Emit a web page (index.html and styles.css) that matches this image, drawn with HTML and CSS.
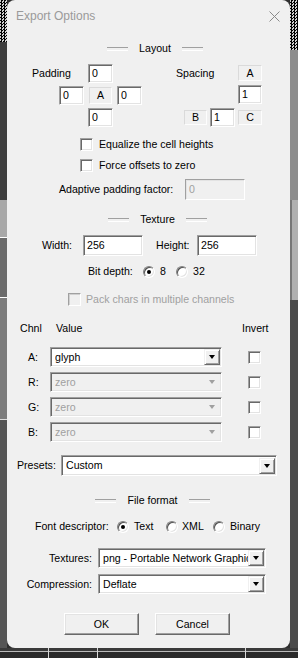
FILE: index.html
```html
<!DOCTYPE html>
<html>
<head>
    <meta charset="utf-8">
    <title>Export Options</title>
    <link rel="stylesheet" href="styles.css">
</head>
<body>
    <div class="desk">
        <div class="edge edge-left">
            <div class="chk"></div>
            <div class="seg seg-dark"></div>
            <div class="seg seg-light"></div>
            <div class="seg seg-arc"></div>
            <div class="seg seg-mid"></div>
            <div class="seg seg-low"></div>
        </div>

        <div class="dialog">
            <div class="titlebar">
                <span class="title">Export Options</span>
                <svg class="close" width="11" height="11" viewBox="0 0 11 11">
                    <path d="M0.5 0.5 L10.5 10.5 M10.5 0.5 L0.5 10.5" stroke="#8a8a8a" stroke-width="1" fill="none"/>
                </svg>
            </div>

            <div class="group-title gt-layout"><span>Layout</span></div>

            <div class="layout">
                <div class="pad-grid">
                    <span class="pad-lbl">Padding</span>
                    <div class="edit p-top">0</div>
                    <div class="edit p-left">0</div>
                    <div class="tag p-mid">A</div>
                    <div class="edit p-right">0</div>
                    <div class="edit p-bottom">0</div>
                </div>
                <div class="space-grid">
                    <span class="space-lbl">Spacing</span>
                    <div class="tag s-a">A</div>
                    <div class="edit s-one">1</div>
                    <div class="tag s-b">B</div>
                    <div class="edit s-two">1</div>
                    <div class="tag s-c">C</div>
                </div>
            </div>

            <div class="check-row check-first"><span class="box"></span>Equalize the cell heights</div>
            <div class="check-row check-second"><span class="box"></span>Force offsets to zero</div>

            <div class="adaptive">
                <span class="adaptive-lbl">Adaptive padding factor:</span>
                <div class="edit disabled adaptive-edit">0</div>
            </div>

            <div class="group-title gt-texture"><span>Texture</span></div>

            <div class="size-row">
                <span class="size-lbl">Width:</span>
                <div class="edit size-edit">256</div>
                <span class="size-lbl height-lbl">Height:</span>
                <div class="edit size-edit">256</div>
            </div>

            <div class="depth-row">
                <span class="depth-lbl">Bit depth:</span>
                <span class="opt opt-8"><span class="radio on"></span>8</span>
                <span class="opt"><span class="radio"></span>32</span>
            </div>

            <div class="check-row pack-row disabled-text"><span class="box box-off"></span>Pack chars in multiple channels</div>

            <div class="chan chan-head">
                <span>Chnl</span>
                <span class="value-head">Value</span>
                <span></span>
                <span>Invert</span>
            </div>

            <div class="chan chan-body">
                <span class="chan-lbl">A:</span>
                <div class="combo"><span class="val">glyph</span><span class="drop"></span></div>
                <span></span>
                <span class="chan-chk"><span class="box"></span></span>

                <span class="chan-lbl">R:</span>
                <div class="combo combo-off"><span class="val">zero</span><span class="drop"></span></div>
                <span></span>
                <span class="chan-chk"><span class="box"></span></span>

                <span class="chan-lbl">G:</span>
                <div class="combo combo-off"><span class="val">zero</span><span class="drop"></span></div>
                <span></span>
                <span class="chan-chk"><span class="box"></span></span>

                <span class="chan-lbl">B:</span>
                <div class="combo combo-off"><span class="val">zero</span><span class="drop"></span></div>
                <span></span>
                <span class="chan-chk"><span class="box"></span></span>
            </div>

            <div class="presets">
                <span class="presets-lbl">Presets:</span>
                <div class="combo presets-combo"><span class="val">Custom</span><span class="drop"></span></div>
            </div>

            <div class="group-title gt-file"><span>File format</span></div>

            <div class="desc-row">
                <span class="desc-lbl">Font descriptor:</span>
                <span class="opt opt-text"><span class="radio on"></span>Text</span>
                <span class="opt opt-xml"><span class="radio"></span>XML</span>
                <span class="opt"><span class="radio"></span>Binary</span>
            </div>

            <div class="file-grid">
                <span class="file-lbl">Textures:</span>
                <div class="combo"><span class="val">png - Portable Network Graphics</span><span class="drop"></span></div>
                <span class="file-lbl">Compression:</span>
                <div class="combo"><span class="val">Deflate</span><span class="drop"></span></div>
            </div>

            <div class="buttons">
                <div class="btn">OK</div>
                <div class="btn">Cancel</div>
            </div>
        </div>

        <div class="edge edge-right">
            <div class="chk chk-tall"></div>
            <div class="seg seg-grey"></div>
            <div class="seg seg-pale"></div>
            <div class="seg seg-deep"></div>
        </div>
    </div>
    <div class="floor"></div>
</body>
</html>
```

FILE: styles.css
```css
* {
    box-sizing: border-box;
}

body {
    margin: 0;
    width: 298px;
    height: 658px;
    overflow: hidden;
    background: #2e2e2e;
    font-family: "Liberation Sans", Arial, sans-serif;
    font-size: 10.6px;
    line-height: 13px;
    color: #000;
}

/* desktop behind the dialog */
.desk {
    display: flex;
    height: 648px;
}

.edge {
    width: 7px;
    display: flex;
    flex-direction: column;
}

.edge-right {
    width: 8px;
}

.chk {
    height: 42px;
    background: conic-gradient(#000 25%, #d0d0d0 0 50%, #000 0 75%, #d0d0d0 0) 0 0 / 3px 3px;
}

.chk-tall { height: 50px; }

.seg-dark { height: 158px; background: #3e3e3e; }
.seg-light { height: 38px; background: #a8a8a8; border-bottom: 1px solid #fff; }
.seg-arc { height: 60px; background: #6b6b6b; border-bottom: 1px solid #fff; }
.seg-mid { height: 122px; background: #7c7c7c; border-bottom: 1px solid #ddd; }
.seg-low { flex: 1; background: #555; }

.seg-grey { height: 150px; background: #8c8c8c; }
.seg-pale { height: 100px; background: #b0b0b0; border-left: 2px solid #777; }
.seg-deep { flex: 1; background: #4a4a4a; }

.floor {
    height: 10px;
    background:
        linear-gradient(to right, transparent 48px, #d8d8d8 48px 49px, transparent 49px 97px, #d8d8d8 97px 98px, transparent 98px 245px, #d8d8d8 245px 246px, transparent 246px),
        linear-gradient(#3a3a3a 0 3px, #bbb 3px 4px, #2a2a2a 4px);
}

/* dialog */
.dialog {
    width: 283px;
    height: 648px;
    background: #f0f0f0;
    border-radius: 8px;
}

.titlebar {
    height: 32px;
    display: flex;
    align-items: center;
    padding-left: 9px;
}

.title {
    font-size: 12px;
    color: #9a9a9a;
}

.close {
    margin-left: auto;
    margin-right: 10px;
}

.group-title {
    display: flex;
    justify-content: center;
    align-items: center;
    height: 13px;
}

.group-title::before,
.group-title::after {
    content: "";
    width: 21px;
    height: 2px;
    border-top: 1px solid #a0a0a0;
    border-bottom: 1px solid #fff;
}

.group-title span {
    margin: 0 11px;
}

.gt-layout { margin-top: 10px; padding-left: 13px; }
.gt-texture { margin-top: 13px; padding-left: 18px; }
.gt-file { margin-top: 18px; padding-left: 8px; }

/* sunken edit box */
.edit,
.combo {
    background: #fff;
    border: 1px solid;
    border-color: #a0a0a0 #fff #fff #a0a0a0;
    box-shadow: inset 1px 1px 0 #696969, inset -1px -1px 0 #e3e3e3;
    padding: 1px 1px 1px 3px;
    display: flex;
    align-items: center;
    white-space: nowrap;
    overflow: hidden;
}

.edit.disabled {
    background: #f0f0f0;
    color: #a0a0a0;
    box-shadow: inset 1px 1px 0 #e3e3e3;
}

.tag {
    display: flex;
    align-items: center;
    justify-content: center;
    border: 1px solid;
    border-color: #dadada #fdfdfd #fdfdfd #dadada;
}

/* layout block */
.layout {
    display: flex;
    margin-top: 9px;
}

.pad-grid {
    margin-left: 25px;
    display: grid;
    grid-template-columns: 23px 25px 25px 25px;
    grid-template-rows: 19px 19px 19px;
    column-gap: 4px;
    row-gap: 3px;
}

.pad-lbl { grid-area: 1 / 1 / 2 / 3; align-self: center; }
.p-top { grid-area: 1 / 3; }
.p-left { grid-area: 2 / 2; }
.p-mid { grid-area: 2 / 3; margin: 1px; }
.p-right { grid-area: 2 / 4; }
.p-bottom { grid-area: 3 / 3; }

.space-grid {
    margin-left: 42px;
    display: grid;
    grid-template-columns: 23px 25px 24px;
    grid-template-rows: 19px 19px 19px;
    column-gap: 3px;
    row-gap: 3px;
}

.space-lbl { grid-area: 1 / 1 / 2 / 3; align-self: center; margin-left: -8px; }
.s-a { grid-area: 1 / 3; height: 16px; margin-top: 1px; }
.s-one { grid-area: 2 / 3; margin-top: -1px; margin-bottom: 1px; }
.s-b { grid-area: 3 / 1; height: 15px; margin-top: 2px; }
.s-two { grid-area: 3 / 2; }
.s-c { grid-area: 3 / 3; height: 15px; margin-top: 2px; }

/* checkboxes and radios */
.box {
    width: 13px;
    height: 13px;
    flex: none;
    background: #fff;
    border: 1px solid;
    border-color: #a0a0a0 #fff #fff #a0a0a0;
    box-shadow: inset 1px 1px 0 #696969, inset -1px -1px 0 #e3e3e3;
}

.box-off {
    background: #f0f0f0;
    box-shadow: inset 1px 1px 0 #d0d0d0;
}

.check-row {
    display: flex;
    align-items: center;
    height: 13px;
    margin-left: 73px;
}

.check-row .box {
    margin-right: 6px;
}

.check-first { margin-top: 11px; }
.check-second { margin-top: 8px; }

.pack-row { margin-top: 15px; margin-left: 61px; }
.pack-row .box { margin-right: 5px; }

.disabled-text { color: #a0a0a0; }

.radio {
    width: 12px;
    height: 12px;
    flex: none;
    border-radius: 50%;
    background: #fff;
    border: 1px solid;
    border-color: #808080 #fff #fff #808080;
    box-shadow: inset 1px 1px 0 #505050, inset -1px -1px 0 #e3e3e3;
    display: flex;
    align-items: center;
    justify-content: center;
    margin-right: 5px;
}

.radio.on::after {
    content: "";
    width: 4px;
    height: 4px;
    border-radius: 50%;
    background: #000;
}

.opt {
    display: flex;
    align-items: center;
}

/* adaptive */
.adaptive {
    display: flex;
    align-items: center;
    margin-top: 7px;
    margin-left: 52px;
}

.adaptive-lbl { width: 126px; }
.adaptive-edit { width: 60px; height: 21px; }

/* texture */
.size-row {
    display: flex;
    align-items: center;
    margin-top: 9px;
    margin-left: 35px;
}

.size-lbl { width: 41px; }
.height-lbl { margin-left: 13px; }
.size-edit { width: 60px; height: 21px; }

.depth-row {
    display: flex;
    align-items: center;
    height: 13px;
    margin-top: 9px;
    margin-left: 81px;
}

.depth-lbl { width: 55px; }
.opt-8 { width: 33px; }

/* channels */
.chan {
    display: grid;
    grid-template-columns: 30px 172px 20px 30px;
    margin-left: 13px;
}

.chan-head {
    margin-top: 16px;
    height: 13px;
}

.value-head { padding-left: 6px; }

.chan-body {
    margin-top: 12px;
    grid-auto-rows: 20px;
    row-gap: 5px;
}

.chan-lbl {
    padding-left: 8px;
    align-self: center;
}

.chan-chk {
    padding-left: 6px;
    display: flex;
    align-items: center;
}

.combo {
    height: 20px;
    padding-left: 4px;
}

.combo .val {
    flex: 1;
    overflow: hidden;
}

.drop {
    width: 16px;
    height: 16px;
    flex: none;
    background: #f0f0f0;
    border: 1px solid;
    border-color: #f0f0f0 #696969 #696969 #f0f0f0;
    box-shadow: inset 1px 1px 0 #fff, inset -1px -1px 0 #a0a0a0;
    display: flex;
    align-items: center;
    justify-content: center;
}

.drop::after {
    content: "";
    border-left: 3.5px solid transparent;
    border-right: 3.5px solid transparent;
    border-top: 4px solid #000;
}

.combo-off {
    background: #f0f0f0;
    color: #a0a0a0;
}

.combo-off .drop {
    border-color: #f0f0f0;
    box-shadow: none;
}

.combo-off .drop::after {
    border-top-color: #a0a0a0;
}

/* presets */
.presets {
    display: flex;
    align-items: center;
    margin-top: 13px;
    margin-left: 10px;
}

.presets-lbl { width: 44px; }
.presets-combo { width: 216px; height: 21px; }

/* file format */
.desc-row {
    display: flex;
    align-items: center;
    height: 13px;
    margin-top: 13px;
    margin-left: 28px;
}

.desc-lbl { width: 82px; }
.opt-text { width: 49px; }
.opt-xml { width: 47px; }
.opt-xml .radio { margin-right: 4px; }

.file-grid {
    display: grid;
    grid-template-columns: 85px 168px;
    grid-auto-rows: 20px;
    column-gap: 6px;
    row-gap: 6px;
    margin-top: 15px;
}

.file-lbl {
    text-align: right;
    align-self: center;
}

/* buttons */
.buttons {
    display: flex;
    gap: 16px;
    margin-top: 19px;
    margin-left: 57px;
}

.btn {
    width: 75px;
    height: 22px;
    background: #f0f0f0;
    border: 1px solid;
    border-color: #fff #696969 #696969 #fff;
    box-shadow: inset -1px -1px 0 #a0a0a0, inset 1px 1px 0 #e3e3e3;
    display: flex;
    align-items: center;
    justify-content: center;
}
```
